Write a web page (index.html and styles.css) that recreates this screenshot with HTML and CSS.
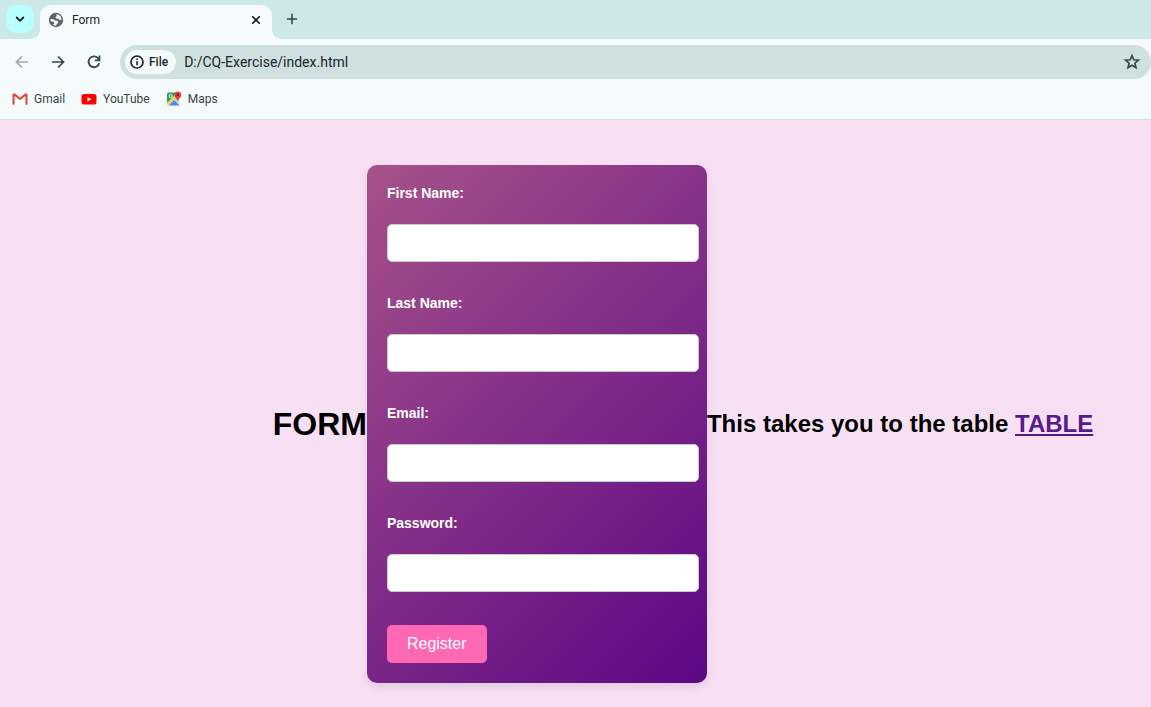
FILE: index.html
```html
<!DOCTYPE html>
<html lang="en">
<head>
<meta charset="utf-8">
<meta name="viewport" content="width=device-width, initial-scale=1">
<title>Form</title>
<link rel="stylesheet" href="styles.css">
</head>
<body>
<header class="browser">
  <div class="tab-strip">
    <button class="tab-search" type="button" aria-label="Search tabs">
      <svg width="10" height="10" viewBox="0 0 10 10" fill="none" stroke="#111c1c" stroke-width="1.800"><path d="M1.200 3 5 6.800 8.800 3"/></svg>
    </button>
    <div class="tab">
      <svg width="16" height="16" viewBox="0 0 16 16"><circle cx="8" cy="8" r="7.200" fill="#5f6368"/><path fill="#f4fbfa" d="M8.500 2.200c2 .1 3.900 1.500 4.800 3.400l.3 2.200-1.800.4-1.400-1.500H8.600L7.300 5.500 8.600 4.400zM2.300 7.200 5.200 7l1.700 1.600 2.700.2.800 1.600-1.700 1.500-.5 1.900c-1.300 0-2.300-.3-3.200-.8l1.400-1.600-.7-1.500-3.300-.9z"/></svg>
      <span class="tab-title">Form</span>
      <button class="icon-button" type="button" aria-label="Close tab">
        <svg width="10" height="10" viewBox="0 0 10 10" stroke="#111c1c" stroke-width="1.600"><path d="m1.200 1.200 7.600 7.600M8.800 1.200 1.200 8.800"/></svg>
      </button>
    </div>
    <button class="icon-button new-tab" type="button" aria-label="New tab">
      <svg width="12" height="12" viewBox="0 0 12 12" stroke="#374646" stroke-width="1.600"><path d="M6 .8v10.400M.8 6h10.400"/></svg>
    </button>
  </div>

  <div class="toolbar">
    <nav class="nav-buttons" aria-label="History">
      <button class="icon-button" type="button" aria-label="Back">
        <svg width="14" height="14" viewBox="0 0 14 14" fill="none" stroke="#a1a9a8" stroke-width="1.700"><path d="M13 7H2M7 1.500 1.500 7 7 12.500"/></svg>
      </button>
      <button class="icon-button" type="button" aria-label="Forward">
        <svg width="14" height="14" viewBox="0 0 14 14" fill="none" stroke="#304747" stroke-width="1.700"><path d="M1 7h11M7 1.500 12.500 7 7 12.500"/></svg>
      </button>
      <button class="icon-button" type="button" aria-label="Reload">
        <svg width="14" height="14" viewBox="0 0 14 14" fill="none" stroke="#304747" stroke-width="1.800"><path d="M12.200 8.200A5.400 5.400 0 1 1 11 3.200l1.300 1.600M12.500.6v4.800H7.800"/></svg>
      </button>
    </nav>
    <div class="omnibox">
      <button class="scheme" type="button">
        <svg width="14" height="14" viewBox="0 0 14 14" fill="none" stroke="#1b2525"><circle cx="7" cy="7" r="6" stroke-width="1.700"/><path d="M7 6.200v4M7 3.400v1.500" stroke-width="1.600"/></svg>
        File
      </button>
      <input class="address" type="text" value="D:/CQ-Exercise/index.html" aria-label="Address">
      <button class="icon-button" type="button" aria-label="Bookmark this page">
        <svg width="18" height="18" viewBox="0 0 18 18" fill="none" stroke="#3b4848" stroke-width="1.700"><path d="m9 2.600 1.800 4.200 4.600.4-3.500 3 1.100 4.500L9 12.300 5 14.700l1.100-4.500-3.500-3 4.600-.4z"/></svg>
      </button>
    </div>
  </div>

  <nav class="bookmarks" aria-label="Bookmarks">
    <a class="bookmark" href="#gmail">
      <svg width="16" height="16" viewBox="0 0 16 16"><path fill="#eee5e5" d="M2 3h12v10H2z"/><path fill="#fff" d="m3 5 5 4 5-4v8H3z"/><path fill="#d54b3f" d="M1.500 2.500H3L8 6.700l5-4.200h1.500q1 0 1 1V13q0 .700-.700.700H13.500V5L8 9.300 2.500 5v8.700H1.200Q.500 13.700.500 13V3.500q0-1 1-1z"/></svg>
      Gmail
    </a>
    <a class="bookmark" href="#youtube">
      <svg width="16" height="16" viewBox="0 0 16 16"><rect x=".500" y="3" width="15" height="10.500" rx="2.600" fill="#f00"/><path fill="#fff" d="m6.500 6 4 2.300-4 2.300z"/></svg>
      YouTube
    </a>
    <a class="bookmark" href="#maps">
      <svg width="16" height="16" viewBox="0 0 16 16"><path fill="#cfd4d5" d="M2 2h11v12.500H2z"/><path fill="#1ea362" d="M2.500 1.500H11L1 12V3q0-1.500 1.500-1.500z"/><path fill="#4a89f3" d="M3 14.500 8 9l5.500 5.500z"/><path fill="#ffd04b" d="m1 12.500 10-10 1.500 1.500L2.300 14.500Q1 14 1 12.500z"/><circle cx="4.600" cy="5" r="1.600" fill="none" stroke="#fff" stroke-width=".9"/><path fill="#e34133" d="M11.800.5c2 0 3.500 1.500 3.500 3.400 0 2.500-2.800 3.400-3.500 6.600-.7-3.200-3.500-4.100-3.500-6.600C8.300 2 9.800.5 11.800.5z"/><circle cx="11.800" cy="3.900" r="1.300" fill="#7d241d"/></svg>
      Maps
    </a>
  </nav>
</header>

<main class="page">
  <h1 class="title">FORM</h1>
  <form class="form">
    <label class="label" for="first-name">First Name:</label>
    <input class="field" type="text" id="first-name">
    <label class="label" for="last-name">Last Name:</label>
    <input class="field" type="text" id="last-name">
    <label class="label" for="email">Email:</label>
    <input class="field" type="email" id="email">
    <label class="label" for="password">Password:</label>
    <input class="field" type="password" id="password">
    <button class="submit" type="button">Register</button>
  </form>
  <h2 class="note">This takes you to the table <a class="table-link" href="#table">TABLE</a></h2>
</main>
</body>
</html>
```
FILE: styles.css
```css
*,
*::before,
*::after {
  box-sizing: border-box;
}

body {
  margin: 0;
  min-height: 100vh;
  background: #f7e0f4;
  font-family: "Liberation Sans", Arial, sans-serif;
  overflow: hidden;
}

/* Browser window */
.browser {
  background: #f4fbfa;
  border-bottom: 1px solid #d5e0e0;
  color: #384444;
  font: 12px/16px Roboto, "Noto Sans", sans-serif;
}

.browser button {
  border: 0;
  padding: 0;
  background: none;
  font: inherit;
}

.browser svg {
  display: block;
  flex: none;
}

.tab-strip {
  display: flex;
  align-items: flex-start;
  height: 39px;
  padding: 5px 6px 0;
  background: #cde8e8;
}

.browser .tab-search {
  display: grid;
  place-items: center;
  width: 28px;
  height: 28px;
  border-radius: 10px;
  background: #b9ffff;
}

.tab {
  position: relative;
  display: flex;
  align-items: center;
  gap: 8px;
  width: 232px;
  height: 34px;
  margin-left: 6px;
  padding: 0 8px 5px;
  border-radius: 10px 10px 0 0;
  background: #f4fbfa;
  color: #1b2525;
}

/* Flared feet where the tab meets the toolbar */
.tab::before,
.tab::after {
  content: "";
  position: absolute;
  bottom: 0;
  width: 10px;
  height: 10px;
}

.tab::before {
  right: 100%;
  background: radial-gradient(circle at 0 0, transparent 10px, #f4fbfa 10px);
}

.tab::after {
  left: 100%;
  background: radial-gradient(circle at 100% 0, transparent 10px, #f4fbfa 10px);
}

.tab-title {
  flex: 1;
}

.browser .icon-button {
  display: grid;
  place-items: center;
  min-width: 16px;
  height: 28px;
}

.browser .new-tab {
  margin-left: 12px;
}

.toolbar {
  display: flex;
  align-items: center;
  gap: 18px;
  padding: 6px 0 6px 14px;
}

.nav-buttons {
  display: flex;
  gap: 20px;
}

.omnibox {
  display: flex;
  flex: 1;
  align-items: center;
  height: 34px;
  padding: 0 10px 0 5px;
  border-radius: 17px;
  background: #cee0e0;
}

.browser .scheme {
  display: flex;
  align-items: center;
  gap: 5px;
  height: 24px;
  padding: 0 8px 0 5px;
  border-radius: 12px;
  background: #f4fbfa;
  color: #1b2525;
  font-weight: 500;
}

.address {
  flex: 1;
  min-width: 0;
  padding: 0 8px;
  border: 0;
  background: none;
  color: #1b2525;
  font: 14px/20px Roboto, "Noto Sans", sans-serif;
}

.bookmarks {
  display: flex;
  gap: 16px;
  padding: 6px 12px 12px;
}

.bookmark {
  display: flex;
  align-items: center;
  gap: 6px;
  color: #384444;
  text-decoration: none;
}

/* Page content */
.page {
  display: flex;
  align-items: center;
  justify-content: center;
  padding: 45px 0 24px 215px;
}

.title,
.note {
  margin: 0;
  color: #000;
  white-space: nowrap;
}

.title {
  font-size: 32px;
}

.note {
  font-size: 24px;
}

.table-link {
  color: #551a8b;
}

.form {
  display: flex;
  flex: none;
  flex-direction: column;
  align-items: flex-start;
  width: 340px;
  padding: 20px;
  border-radius: 10px;
  background: linear-gradient(135deg, #a6528a, #5c0785);
  box-shadow: 0 4px 8px rgba(0, 0, 0, 0.1);
}

.label {
  margin-bottom: 23px;
  color: #fff;
  font-size: 14px;
  font-weight: bold;
  line-height: 16px;
}

.field {
  width: calc(100% + 12px);
  height: 38px;
  margin-bottom: 33px;
  padding: 0 10px;
  border: 1px solid #ccc;
  border-radius: 5px;
  background: #fff;
  font-size: 16px;
}

.submit {
  padding: 10px 20px;
  border: 0;
  border-radius: 5px;
  background: #ff69b4;
  color: #fff;
  font: 16px/18px "Liberation Sans", Arial, sans-serif;
}
```
